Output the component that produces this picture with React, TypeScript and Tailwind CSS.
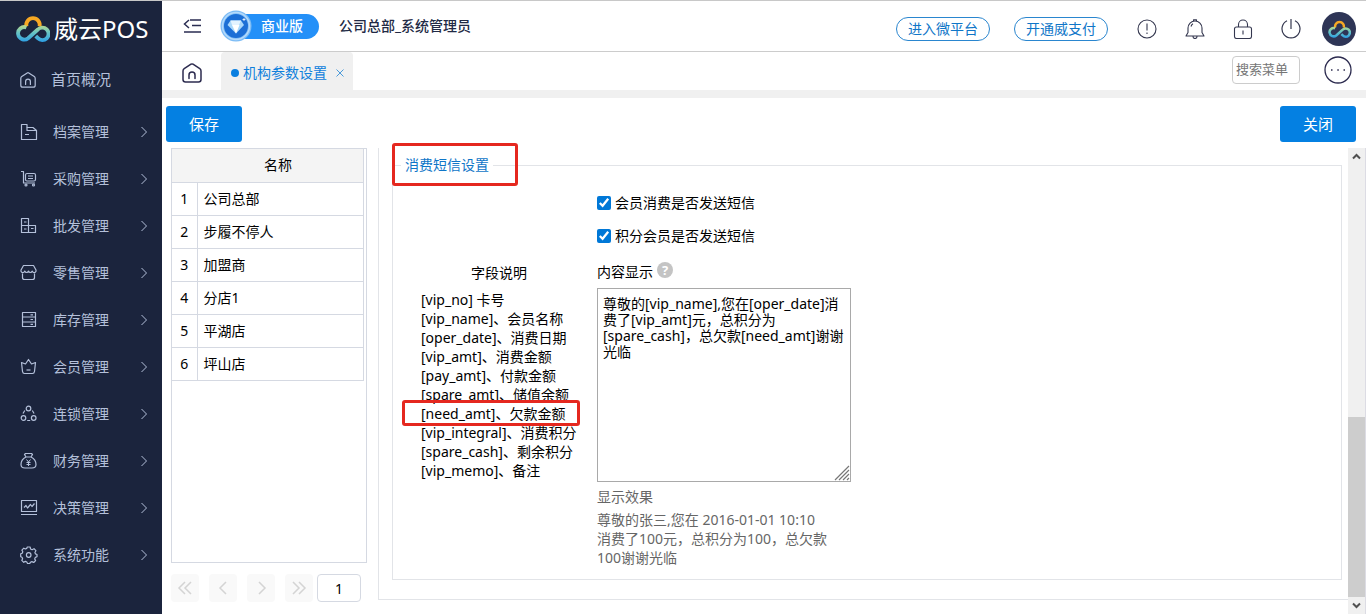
import type { ReactNode } from "react";

const menu: { label: string; icon: ReactNode }[] = [
  {
    label: "档案管理",
    icon: (
      <>
        <path d="M1.500 16.500v-15h5.500v3h6l3.500 3v9z" />
        <path d="M7 4.500v3h9.500M5 11.500h4" />
      </>
    ),
  },
  {
    label: "采购管理",
    icon: (
      <>
        <path d="M1 1.500h2.500v11.500h11.500" />
        <rect x="5.500" y="3.500" width="10" height="7.500" rx="1.500" />
        <path d="M8 6h5M8 8.500h5" />
        <circle cx="6" cy="15" r="1" />
        <circle cx="13.500" cy="15" r="1" />
      </>
    ),
  },
  {
    label: "批发管理",
    icon: (
      <>
        <path d="M1.500 1.500h7v14h-7zM8.500 8.500h7v7h-7zM1.500 8.500h7" />
        <path d="M4 5h2.500M4 12h2.500M11 11.500h2.500" />
      </>
    ),
  },
  {
    label: "零售管理",
    icon: (
      <>
        <path d="M3.500 1.500h10l2.500 4.500c.6 3-3.200 3.500-3.700 1-.7 2-3.300 2-3.800 0-.5 2-3.100 2-3.800 0-.5 2.500-4.300 2-3.700-1z" />
        <path d="M2.500 9.500v4q0 2 2 2h8q2 0 2-2v-4" />
      </>
    ),
  },
  {
    label: "库存管理",
    icon: (
      <>
        <path d="M2.500 1.500h13v14h-13zM2.500 6h13M2.500 11h13" />
        <path d="M10.500 3.800h2.500M10.500 8.500h2.500M10.500 13.300h2.500" />
      </>
    ),
  },
  {
    label: "会员管理",
    icon: (
      <>
        <path d="M1.500 4.500l4 1.500 3-4.500 3 4.500 4-1.500-1 9q-.3 2-2 2H4.500q-1.700 0-2-2z" />
        <path d="M6.500 12h4" />
      </>
    ),
  },
  {
    label: "连锁管理",
    icon: (
      <>
        <circle cx="8.500" cy="3.500" r="2.300" />
        <circle cx="3.500" cy="13" r="2.300" />
        <circle cx="13.700" cy="13" r="2.300" />
        <path d="M4.800 5.500L3 8.500M12.300 5.500l1.800 3M7.200 15.500h3" />
      </>
    ),
  },
  {
    label: "财务管理",
    icon: (
      <>
        <path d="M5.500 1.500h6l1 1-1.500 2.500c4 2 5 5 5 7.500q0 3.500-4 3.500H5q-4 0-4-3.500C1 10 2 7 6 5L4.500 2.500zM6 5h5" />
        <path d="M6.500 7.500l2 2.500 2-2.500M8.500 10v4M6.500 10.500h4M6.500 12.500h4" strokeWidth="1" />
      </>
    ),
  },
  {
    label: "决策管理",
    icon: (
      <>
        <path d="M1.500 1.500h15v11h-15zM1 15.500h16" />
        <path d="M4 8.500l2-2 1.500 2.500 3-3.500 1.500 2 2.500-3" />
      </>
    ),
  },
  {
    label: "系统功能",
    icon: (
      <>
        <path d="M7.300 1h2.800l.5 2 1.500.7 1.900-1 1.900 2-1 1.800.6 1.400 1.500.6v2.300l-1.700.6-.6 1.500.9 1.700-1.900 1.900-1.800-.9-1.500.6-.6 1.300H7.500l-.7-1.500-1.400-.6-1.700.9-1.900-1.900.8-1.700-.6-1.400-1.300-.5V7.800l1.500-.5.6-1.500-.9-1.700 1.900-1.900 1.600.8 1.300-.6z" />
        <circle cx="8.700" cy="9" r="2.300" />
      </>
    ),
  },
];

const branches = ["公司总部", "步履不停人", "加盟商", "分店1", "平湖店", "坪山店"];

const fields = [
  "[vip_no] 卡号",
  "[vip_name]、会员名称",
  "[oper_date]、消费日期",
  "[vip_amt]、消费金额",
  "[pay_amt]、付款金额",
  "[spare_amt]、储值余额",
  "[need_amt]、欠款金额",
  "[vip_integral]、消费积分",
  "[spare_cash]、剩余积分",
  "[vip_memo]、备注",
];

const template =
  "尊敬的[vip_name],您在[oper_date]消费了[vip_amt]元，总积分为[spare_cash]，总欠款[need_amt]谢谢光临";

const pagerButtons = [
  { label: "首页", path: "M14 8l-6 6 6 6M20 8l-6 6 6 6" },
  { label: "上一页", path: "M17 8l-6 6 6 6" },
  { label: "下一页", path: "M12 8l6 6-6 6" },
  { label: "末页", path: "M8 8l6 6-6 6M14 8l6 6-6 6" },
];

function CloudLogo({ className, id }: { className: string; id: string }) {
  return (
    <svg viewBox="0 0 98 78" className={className} fill="none" strokeWidth="11">
      <defs>
        <linearGradient id={id} x1="0" y1="30" x2="0" y2="78" gradientUnits="userSpaceOnUse">
          <stop offset="0" stopColor="#b9d78c" />
          <stop offset="0.4" stopColor="#6cc6c0" />
          <stop offset="1" stopColor="#2c9fe6" />
        </linearGradient>
      </defs>
      <path d="M30 33A19.500 19.500 0 1 1 68 33" stroke="#f7a823" />
      <path d="M30 36A18 18 0 1 0 35 67L63 42A18 18 0 1 1 63 67L57 61" stroke={`url(#${id})`} />
    </svg>
  );
}

function HomeIcon({ className }: { className: string }) {
  return (
    <svg viewBox="0 0 20 20" className={className} fill="none" stroke="currentColor" strokeLinecap="round" strokeLinejoin="round">
      <path d="M1 8q0-1.500 1.200-2.300L9 1.200q1-.6 2 0l6.800 4.500Q19 6.500 19 8v8.500q0 2.500-2.500 2.500h-13Q1 19 1 16.500z" />
      <path d="M7 15.500v-3.500a3 3 0 0 1 6 0v3.500" />
    </svg>
  );
}

function Sidebar() {
  return (
    <aside className="w-[162px] shrink-0 bg-[#1b243d] text-[#b4c0da]">
      <div className="flex h-[55px] items-center gap-1 pl-4">
        <CloudLogo id="side-logo" className="h-[27px] w-[34px]" />
        <span className="text-2xl leading-8 whitespace-nowrap text-white">威云POS</span>
      </div>
      <nav>
        <a href="#" className="mb-[5px] flex h-[47px] items-center pl-5 text-[15px]">
          <HomeIcon className="mr-[15px] size-4 stroke-[1.500]" />
          首页概况
        </a>
        {menu.map((item) => (
          <a key={item.label} href="#" className="flex h-[47px] items-center pr-[14px] pl-5 text-sm">
            <svg viewBox="0 0 18 18" className="mr-[15px] size-[18px]" fill="none" stroke="currentColor" strokeWidth="1.2" strokeLinejoin="round">
              {item.icon}
            </svg>
            <span className="flex-1">{item.label}</span>
            <svg viewBox="0 0 8 12" className="h-3 w-2" fill="none" stroke="currentColor">
              <path d="M1.500 1l5 5-5 5" />
            </svg>
          </a>
        ))}
      </nav>
    </aside>
  );
}

function Header() {
  return (
    <header className="flex h-[51px] items-center border-b border-[#ccc] pr-[10px] pl-5">
      <button aria-label="收起菜单" className="text-[#2a2d52]">
        <svg viewBox="0 0 20 16" className="h-4 w-5" fill="none" stroke="currentColor" strokeWidth="1.500">
          <path d="M8 2h11M10 7.500h9M2 14h17M7 2L2.500 6 7 10" />
        </svg>
      </button>
      <div className="ml-[18px] flex items-center">
        <svg viewBox="0 0 32 32" className="z-10 size-8">
          <circle cx="16" cy="16" r="15.500" fill="#7dbcf5" />
          <circle cx="16" cy="16" r="13.500" fill="none" stroke="#b5dafb" strokeWidth="1.500" />
          <circle cx="16" cy="16" r="12" fill="#1c6fd6" />
          <path d="M10.500 10.500h10.500l3 4.500L16 23.500 7.500 15z" fill="#a9d8fb" />
          <path d="M10.500 10.500h10.500l-2 4.500h-7z" fill="#e3f3ff" />
          <path d="M12 15h7.500L16 23.500z" fill="#fff" />
          <path d="M24 8v3M22.500 9.500h3" stroke="#fff" strokeWidth=".8" />
        </svg>
        <span className="-ml-4 flex h-[25px] w-[83px] items-center rounded-r-full bg-[#2490f8] pl-[25px] text-sm font-medium text-white">
          商业版
        </span>
      </div>
      <span className="ml-5 text-sm font-medium text-[#222a45]">公司总部_系统管理员</span>
      <div className="ml-auto flex items-center pt-[5px]">
        <button className="h-6 w-[94px] rounded-full border border-[#2a86cf] text-sm leading-5 text-[#0f76c8]">进入微平台</button>
        <button className="ml-6 h-6 w-[94px] rounded-full border border-[#2a86cf] text-sm leading-5 text-[#0f76c8]">开通威支付</button>
        <div className="ml-[29px] flex items-center gap-7 text-[#34374f]">
          <button aria-label="提示">
            <svg viewBox="0 0 20 20" className="size-5" fill="none" stroke="currentColor" strokeWidth="1.100">
              <circle cx="10" cy="10" r="9" />
              <path d="M10 4.500v7M10 13.500v1.500" />
            </svg>
          </button>
          <button aria-label="通知">
            <svg viewBox="0 0 20 20" className="size-5" fill="none" stroke="currentColor" strokeWidth="1.100" strokeLinejoin="round">
              <path d="M1 17h18l-2-3.500V9a7 7 0 0 0-14 0v4.500zM8.500 2V.7h3V2M8 17.500a2 2 0 0 0 4 0" />
              <path d="M6 7.500q.5-2 2-2.700" />
            </svg>
          </button>
          <button aria-label="锁定">
            <svg viewBox="0 0 20 20" className="size-5" fill="none" stroke="currentColor" strokeWidth="1.100">
              <rect x="1.500" y="8" width="17" height="11.500" rx="2" />
              <path d="M5.500 8V5.500a4.500 4.500 0 0 1 9 0V8M10 11.500v4" />
            </svg>
          </button>
          <button aria-label="退出">
            <svg viewBox="0 0 20 20" className="size-5" fill="none" stroke="currentColor" strokeWidth="1.200">
              <path d="M6 1.800a9 9 0 1 0 8 0M10 0v10" />
            </svg>
          </button>
        </div>
        <span className="ml-[21px] flex size-[34px] items-center justify-center rounded-full bg-[#2e3556]">
          <CloudLogo id="avatar-logo" className="h-[18px] w-[23px]" />
        </span>
      </div>
    </header>
  );
}

function TabBar() {
  return (
    <div className="flex h-[38px] items-end pr-[14px]">
      <a href="#" aria-label="首页" className="flex h-full w-[59px] items-center justify-center pt-1 text-[#2c2b4f]">
        <HomeIcon className="size-5 stroke-[1.500]" />
      </a>
      <div className="flex h-[38px] w-[132px] items-center rounded-t bg-[#f0f0f0] pt-1 pl-[10px] text-sm text-[#0f80dc]">
        <span className="mr-1 size-2 rounded-full bg-[#0a7fe0]" />
        <a href="#">机构参数设置</a>
        <button aria-label="关闭标签" className="ml-[9px]">
          <svg viewBox="0 0 8 8" className="size-2" fill="none" stroke="#4a9ada">
            <path d="M.5.500l7 7M7.500.500l-7 7" />
          </svg>
        </button>
      </div>
      <div className="ml-auto flex h-full items-center gap-6">
        <input
          aria-label="搜索菜单"
          placeholder="搜索菜单"
          className="mb-[2px] h-7 w-[68px] rounded-sm border border-[#ccc] px-[3px] pb-[2px] text-[13px] placeholder:text-[#757575]"
        />
        <button aria-label="更多" className="mb-[2px]">
          <svg viewBox="0 0 28 28" className="size-7" fill="none" stroke="#2c2b4f" strokeWidth="1.300">
            <circle cx="14" cy="14" r="13" />
            <path d="M7 14h1.500M13.300 14h1.500M19.500 14h1.500" strokeWidth="1.500" />
          </svg>
        </button>
      </div>
    </div>
  );
}

function BranchList() {
  return (
    <div className="flex w-[196px] shrink-0 flex-col">
      <div className="h-[415px] border border-[#d5d9e2]">
        <div className="pr-[2px]">
          <table className="w-full table-fixed border-collapse text-sm text-black">
            <thead>
              <tr className="h-[33px] border-r border-b border-[#d5d9e2] bg-[#f4f4f4]">
                <th className="w-[25px]" />
                <th className="pr-1 font-normal">名称</th>
              </tr>
            </thead>
            <tbody>
              {branches.map((name, i) => (
                <tr key={name} className="h-[33px] border-r border-b border-[#d5d9e2]">
                  <td className="border-r border-[#d5d9e2] text-center">{i + 1}</td>
                  <td className="pl-[6px]">{name}</td>
                </tr>
              ))}
            </tbody>
          </table>
        </div>
      </div>
      <div className="mt-[11px] flex items-center">
        {pagerButtons.map((b) => (
          <button key={b.label} aria-label={b.label} className="mr-[10px] rounded-sm bg-[#f9f9f9]">
            <svg viewBox="0 0 28 28" className="size-7" fill="none" stroke="#d4d4d4" strokeWidth="1.500">
              <path d={b.path} />
            </svg>
          </button>
        ))}
        <input
          aria-label="页码"
          defaultValue="1"
          className="-ml-[6px] h-7 w-11 rounded border border-[#d5d9e2] text-center text-sm"
        />
      </div>
    </div>
  );
}

function SmsSettings() {
  return (
    <fieldset className="border border-[#e2e4e8] pb-3 text-sm text-black">
      <legend className="relative ml-2 px-1 leading-5 text-[#0f76c8]">
        消费短信设置
        <span className="pointer-events-none absolute -top-3 -left-[9px] h-[43px] w-[126px] rounded-[3px] border-3 border-[#e5281f]" />
      </legend>
      <div className="flex pt-3">
        <div className="flex w-[204px] shrink-0 flex-col pt-[76px] pl-7 leading-[19px]">
          <h3 className="w-[156px] text-center">字段说明</h3>
          <ul className="mt-2 whitespace-nowrap">
            {fields.map((f) => (
              <li key={f} className="relative">
                {f}
                {f.startsWith("[need_amt]") && (
                  <span className="pointer-events-none absolute -top-1 -left-[19px] h-[26px] w-[178px] rounded-[3px] border-3 border-[#e5281f]" />
                )}
              </li>
            ))}
          </ul>
        </div>
        <div className="w-[254px]">
          <label className="flex h-8 items-center gap-1">
            <input type="checkbox" defaultChecked className="size-[14px] accent-[#0078d7]" />
            会员消费是否发送短信
          </label>
          <label className="flex h-[33px] items-center gap-1">
            <input type="checkbox" defaultChecked className="size-[14px] accent-[#0078d7]" />
            积分会员是否发送短信
          </label>
          <div className="flex h-9 items-center gap-1">
            <label htmlFor="sms-content" className="pt-1">内容显示</label>
            <span className="flex size-4 items-center justify-center rounded-full bg-[#c4c4c4] text-[13px] leading-4 font-bold text-white">?</span>
          </div>
          <div className="relative">
            <textarea
              id="sms-content"
              defaultValue={template}
              className="block h-[194px] w-full resize-none border border-[#a9a9a9] py-[7px] pr-1 pl-[5px] leading-4"
            />
            <svg viewBox="0 0 16 16" className="absolute right-px bottom-px size-4" stroke="#777" strokeWidth="1.200">
              <path d="M1 15L15 1M5 15L15 5M9 15l6-6M13 15l2-2" />
            </svg>
          </div>
          <div className="pt-[5px] leading-[19px] text-[#666]">
            <p>显示效果</p>
            <p className="mt-1 whitespace-nowrap">
              尊敬的张三,您在 2016-01-01 10:10
              <br />
              消费了100元，总积分为100，总欠款
              <br />
              100谢谢光临
            </p>
          </div>
        </div>
      </div>
    </fieldset>
  );
}

function ScrollTrack() {
  return (
    <div className="flex w-[18px] shrink-0 flex-col items-center border-r border-[#dcdce4] bg-[#f0f0f0]" aria-hidden="true">
      <svg viewBox="0 0 17 17" className="size-[17px]" fill="none" stroke="#505050" strokeWidth="2">
        <path d="M5 10.500L8.500 7l3.500 3.500" />
      </svg>
      <div className="flex-[252]" />
      <div className="w-full flex-[180] bg-[#cdcdcd]" />
      <svg viewBox="0 0 17 17" className="size-[17px]" fill="none" stroke="#505050" strokeWidth="2">
        <path d="M5 6.500L8.500 10l3.500-3.500" />
      </svg>
    </div>
  );
}

export default function App() {
  return (
    <div className="flex min-h-screen border-t border-[#c8c8c8] bg-white font-['Noto_Sans','Noto_Sans_CJK_SC',sans-serif]">
      <Sidebar />
      <main className="flex min-w-0 flex-1 flex-col">
        <Header />
        <TabBar />
        <div className="h-2 bg-[#f0f0f0]" />
        <div className="flex justify-between pt-2 pr-[10px] pb-[6px] pl-1">
          <button className="h-9 w-[76px] rounded-[3px] bg-[#0480e2] text-[15px] text-white">保存</button>
          <button className="h-9 w-[76px] rounded-[3px] bg-[#0480e2] text-[15px] text-white">关闭</button>
        </div>
        <div className="flex flex-1 pl-[9px]">
          <BranchList />
          <div className="ml-[11px] flex-1">
            <div className="border-b border-l border-[#e2e4e8] pt-[7px] pr-[6px] pb-[19px] pl-[13px]">
              <SmsSettings />
            </div>
          </div>
          <ScrollTrack />
        </div>
      </main>
    </div>
  );
}
